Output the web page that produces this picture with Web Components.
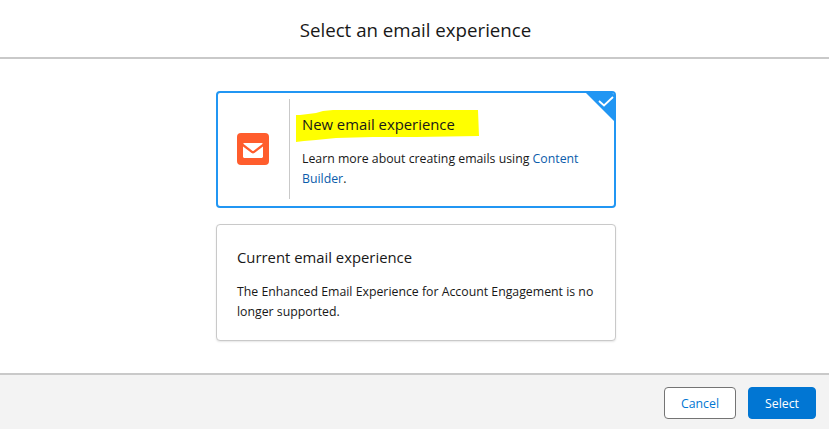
<!DOCTYPE html>
<html><head><meta charset="utf-8"><style>
html,body{margin:0;padding:0;height:100%;background:#fff;overflow:hidden}
body{font-family:"Open Sans","Noto Sans",sans-serif;color:#181818}
a{color:#0b5cab;text-decoration:none}
</style></head><body>
<email-modal>
  <span slot="title">Select an email experience</span>
  <option-card selected>
    <span slot="title">New email experience</span>
    Learn more about creating emails using <a href="#">Content Builder</a>.
  </option-card>
  <option-card>
    <span slot="title">Current email experience</span>
    The Enhanced Email Experience for Account Engagement is no longer supported.
  </option-card>
  <modal-button slot="footer">Cancel</modal-button>
  <modal-button slot="footer" brand>Select</modal-button>
</email-modal>
<script>
class EmailModal extends HTMLElement{constructor(){super();this.attachShadow({mode:'open'}).innerHTML=`<style>
:host{display:grid;grid-template-rows:59px 1fr 56px;height:429px;width:829px}
header{display:flex;align-items:center;justify-content:center;border-bottom:2px solid #c9c9c9;font-size:18.7px;padding:2px 0 0 2px;box-sizing:border-box;color:#181818}
main{display:flex;flex-direction:column;align-items:center;gap:16px;padding:32px 0 0 3px;box-sizing:border-box}
footer{display:flex;justify-content:flex-end;align-items:flex-start;gap:12px;padding:12px 13px 0 0;background:#f3f3f3;border-top:2px solid #c9c9c9;box-sizing:border-box}
</style><header><slot name="title"></slot></header><main><slot></slot></main><footer><slot name="footer"></slot></footer>`}}
class OptionCard extends HTMLElement{constructor(){super();const sel=this.hasAttribute('selected');this.attachShadow({mode:'open'}).innerHTML=`<style>
:host{display:flex;width:400px;height:117px;box-sizing:border-box;background:#fff;border-radius:4px;position:relative;border:1px solid #c9c9c9;box-shadow:0 1px 2px rgba(0,0,0,.1);font-size:12.3px;line-height:20px;color:#181818;overflow:hidden}
:host([selected]){border:2px solid #2196f3;box-shadow:none}
.icon{width:72px;display:flex;align-items:center;justify-content:center;flex:none;border-right:1px solid #c9c9c9;margin:6px 0;height:100px;box-sizing:border-box;padding-right:1px}
.body{flex:1;padding:20px 18px 0 20px;position:relative}
:host([selected]) .body{padding:19px 22px 0 12px}
.title{display:block;font-size:14.850px;line-height:24px;margin-bottom:13px;position:relative}
.text{position:relative}
.hl{position:absolute;left:6px;top:17px;width:183px;height:32px}
.corner{position:absolute;top:-2px;right:-2px;width:32px;height:32px}
</style>
${sel?`<div class="icon"><svg width="32" height="32" viewBox="0 0 32 32" aria-hidden="true"><rect width="32" height="32" rx="4" fill="#ff5d2d"/><path fill="#fff" d="M7 10h18c.6 0 .9.7.4 1.100L16.700 17.800c-.4.300-1 .300-1.400 0L6.600 11.100C6.100 10.700 6.400 10 7 10z"/><path fill="#fff" d="M6 13.500l8.600 6.600c.8.600 2 .600 2.800 0L26 13.500v10c0 .9-.7 1.500-1.500 1.500h-17C6.700 25 6 24.400 6 23.500z"/></svg></div>`:''}
<div class="body">
${sel?`<svg class="hl" viewBox="0 0 183 32" aria-hidden="true"><path fill="#ffff00" d="M0 5 4 5 20 3 27 1 37 0 182 0 183 26 120 27 77 27 40 28 20 30 8 31 0 32z"/></svg>`:''}
<span class="title"><slot name="title"></slot></span>
<div class="text"><slot></slot></div></div>
${sel?`<svg class="corner" viewBox="0 0 32 32" aria-hidden="true"><path d="M0 0H28a4 4 0 0 1 4 4V32z" fill="#2196f3"/><path d="M15 10l5 4.500L29 6" fill="none" stroke="#fff" stroke-width="1.800"/></svg>`:''}`}}
class ModalButton extends HTMLElement{constructor(){super();this.attachShadow({mode:'open'}).innerHTML=`<style>
:host{display:inline-flex;align-items:center;justify-content:center;height:32px;box-sizing:border-box;width:72px;border:1px solid #747474;border-radius:4px;background:#fff;color:#0176d3;font-size:12.3px}
:host([brand]){width:68px;background:#0176d3;border-color:#0176d3;color:#fff}
</style><slot></slot>`}}
customElements.define('email-modal',EmailModal);
customElements.define('option-card',OptionCard);
customElements.define('modal-button',ModalButton);
</script>
</body></html>
